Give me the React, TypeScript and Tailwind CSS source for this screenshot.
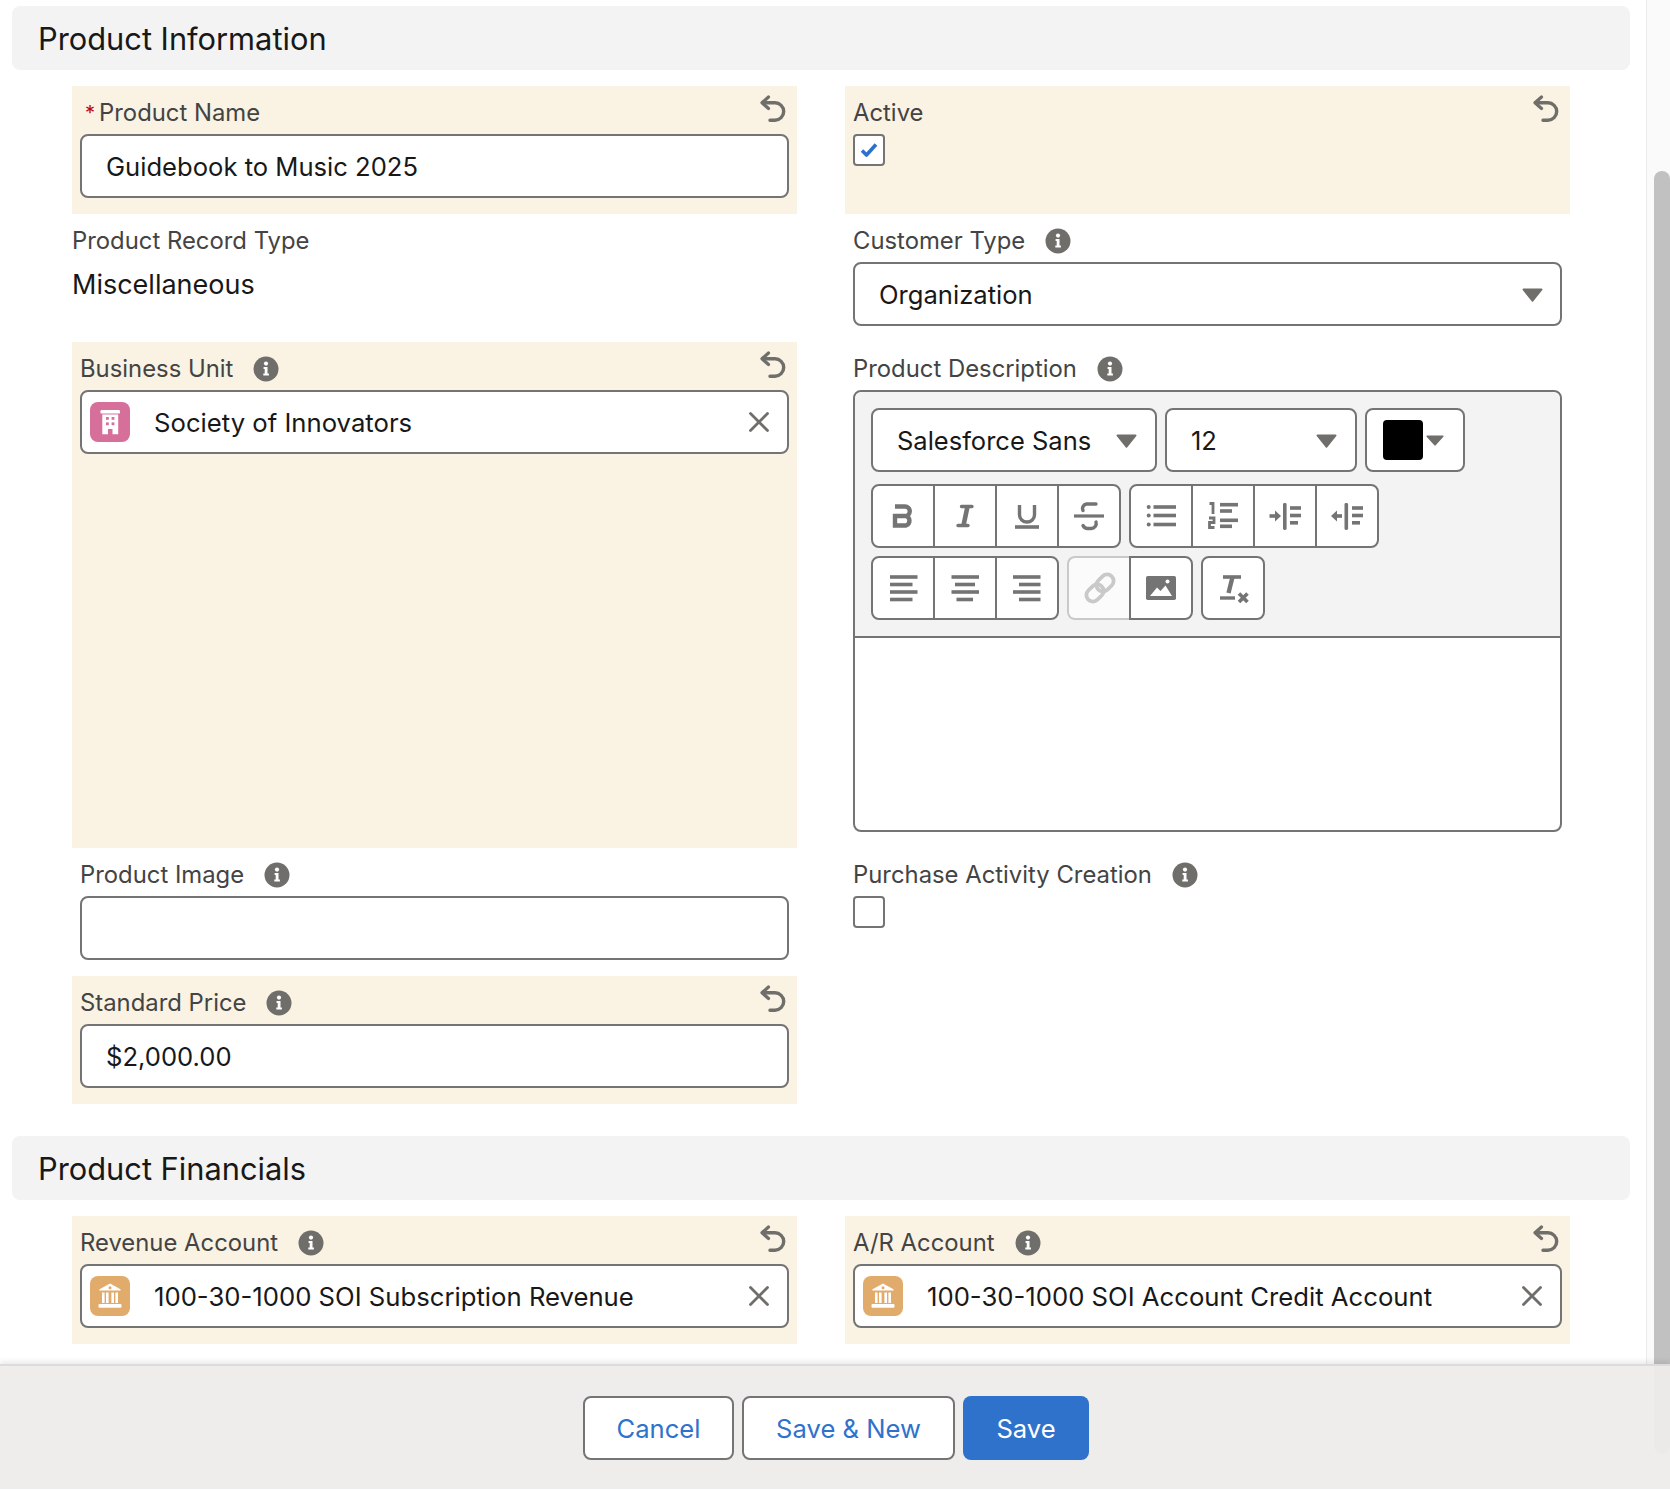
import React from "react";

const FONT = "font-['Inter','Liberation_Sans',sans-serif]";

function Info() {
  return (
    <svg width="26" height="26" viewBox="0 0 26 26" className="shrink-0">
      <circle cx="13" cy="13" r="12.5" fill="#706e6b" />
      <circle cx="13" cy="7.6" r="2.1" fill="#fff" />
      <path d="M10.6 11h3.9v6.6h1.4v2h-5.6v-2h1.4v-4.6h-1.1z" fill="#fff" />
    </svg>
  );
}

function Undo() {
  return (
    <svg width="26" height="28" viewBox="0 0 26 28" fill="none" className="shrink-0">
      <path d="M8.5 2 L2 7.8 L8.5 13.5" stroke="#706e6b" strokeWidth="3.2" strokeLinecap="round" strokeLinejoin="round" />
      <path d="M3 7.8 H15 a8.7 8.7 0 0 1 0 17.4 H10" stroke="#706e6b" strokeWidth="3.4" strokeLinecap="round" />
    </svg>
  );
}

function Close() {
  return (
    <svg width="20" height="20" viewBox="0 0 20 20" fill="none" className="shrink-0">
      <path d="M1.5 1.5 L18.5 18.5 M18.5 1.5 L1.5 18.5" stroke="#706e6b" strokeWidth="2.8" strokeLinecap="round" />
    </svg>
  );
}

function Caret({ w = 21, h = 14 }: { w?: number; h?: number }) {
  return (
    <svg width={w} height={h} viewBox="0 0 21 14" preserveAspectRatio="none" className="shrink-0">
      <path d="M1.5 0.5 H19.5 a1 1 0 0 1 0.8 1.6 L11.3 13.2 a1 1 0 0 1 -1.6 0 L0.7 2.1 a1 1 0 0 1 0.8 -1.6z" fill="#706e6b" />
    </svg>
  );
}

function Bank() {
  return (
    <div className="w-10 h-10 rounded-lg bg-[#e1ab6c] shrink-0 flex items-center justify-center">
      <svg width="40" height="40" viewBox="0 0 40 40">
        <path d="M20 7.5 L30 13 a0.8 0.8 0 0 1 -0.4 1.6 H10.4 a0.8 0.8 0 0 1 -0.4 -1.6z" fill="#fff" />
        <circle cx="20" cy="11.8" r="1.5" fill="#e1ab6c" />
        <rect x="12" y="16.5" width="2.6" height="10.5" fill="#fff" />
        <rect x="16" y="16.5" width="2.6" height="10.5" fill="#fff" />
        <rect x="21.4" y="16.5" width="2.6" height="10.5" fill="#fff" />
        <rect x="25.4" y="16.5" width="2.6" height="10.5" fill="#fff" />
        <rect x="8.5" y="28" width="23" height="3.8" rx="1" fill="#fff" />
      </svg>
    </div>
  );
}

function Building() {
  return (
    <div className="w-10 h-10 rounded-lg bg-[#d6709b] shrink-0 flex items-center justify-center">
      <svg width="40" height="40" viewBox="0 0 40 40">
        <rect x="10.5" y="8" width="19.5" height="3.6" rx="1.2" fill="#fff" />
        <path d="M12.3 12.5 H28.2 V32.3 H22.5 V27 H18 V32.3 H12.3z" fill="#fff" />
        <rect x="16" y="15" width="2.8" height="2.8" fill="#d6709b" />
        <rect x="21.6" y="15" width="2.8" height="2.8" fill="#d6709b" />
        <rect x="16" y="20.4" width="2.8" height="2.8" fill="#d6709b" />
        <rect x="21.6" y="20.4" width="2.8" height="2.8" fill="#d6709b" />
      </svg>
    </div>
  );
}

function Field({
  label,
  info,
  undo,
  highlight,
  required,
  flush,
  children,
}: {
  label: string;
  info?: boolean;
  undo?: boolean;
  highlight?: boolean;
  required?: boolean;
  flush?: boolean;
  children?: React.ReactNode;
}) {
  return (
    <div className={`${highlight ? "bg-[#faf2e2]" : ""} ${flush ? "" : "px-2"} pb-4`}>
      <div className="h-12 pt-[6px] flex items-center justify-between">
        <div className="flex items-center text-[23.85px] leading-[32px] text-[#444444]">
          {required && <span className="ml-[5px] mr-[4px] text-[#ba0517] text-[20px] leading-[20px]">*</span>}
          <span>{label}</span>
          {info && <span className="ml-5 -mt-[1px] flex"><Info /></span>}
        </div>
        {undo && <span className="self-start mt-[3px] mr-[3px] flex"><Undo /></span>}
      </div>
      {children}
    </div>
  );
}

function TextBox({ children }: { children?: React.ReactNode }) {
  return (
    <div className="h-16 rounded-lg border-2 border-[#747474] bg-white pl-[24px] pr-[17px] pt-[2px] flex items-center justify-between text-[25.6px] text-[#181818]">
      {children}
    </div>
  );
}

function Lookup({ tile, text }: { tile: React.ReactNode; text: string }) {
  return (
    <div className="h-16 rounded-lg border-2 border-[#747474] bg-white pl-2 pr-[18px] flex items-center text-[25.7px] text-[#181818]">
      {tile}
      <span className="ml-6 flex-1 mt-[2px]">{text}</span>
      <Close />
    </div>
  );
}

function CheckBox({ checked }: { checked?: boolean }) {
  return (
    <div className="w-8 h-8 rounded border-2 border-[#747474] bg-white flex items-center justify-center">
      {checked && (
        <svg width="18" height="16" viewBox="0 0 18 16" fill="none">
          <path d="M2 8.5 L6.5 13 L16 2.5" stroke="#2e71cc" strokeWidth="3.6" strokeLinejoin="round" />
        </svg>
      )}
    </div>
  );
}

function Tool({ children, disabled }: { children: React.ReactNode; disabled?: boolean }) {
  return (
    <div
      className={`w-16 h-16 flex items-center justify-center border-2 -ml-[2px] first:ml-0 first:rounded-l-lg last:rounded-r-lg ${
        disabled ? "bg-[#fbfbfb] border-[#c9c9c9] border-r-0" : "bg-white border-[#747474]"
      }`}
    >
      {children}
    </div>
  );
}

function Ico({ children }: { children: React.ReactNode }) {
  return (
    <svg width="32" height="32" viewBox="0 0 32 32" fill="none" stroke="#747474" strokeWidth="3.2">
      {children}
    </svg>
  );
}

function Bars({ lines }: { lines: [number, number, number][] }) {
  return (
    <>
      {lines.map(([y, a, b], i) => (
        <rect key={i} x={a} y={y - 1.8} width={b - a} height="3.6" fill="#747474" stroke="none" />
      ))}
    </>
  );
}

function Toolbar() {
  return (
    <div className="bg-[#f3f3f3] border-b-2 border-[#747474] pl-4 pt-4 pb-4 rounded-t-lg flex flex-col">
      <div className="flex gap-2">
        <div className="w-[286px] h-16 rounded-lg border-2 border-[#747474] bg-white pl-[24px] pr-[18px] pt-[2px] flex items-center justify-between text-[25.5px] text-[#181818]">
          <span>Salesforce Sans</span>
          <Caret />
        </div>
        <div className="w-[192px] h-16 rounded-lg border-2 border-[#747474] bg-white pl-[24px] pr-[18px] pt-[2px] flex items-center justify-between text-[25.5px] text-[#181818]">
          <span>12</span>
          <Caret />
        </div>
        <div className="w-[100px] h-16 rounded-lg border-2 border-[#747474] bg-white pl-4 flex items-center">
          <div className="w-10 h-10 rounded bg-black" />
          <span className="ml-[3px] flex"><Caret w={18} h={11} /></span>
        </div>
      </div>
      <div className="flex gap-2 mt-3">
        <div className="flex">
          <Tool>
            <Ico>
              <path d="M8 6.5 H18 a4.6 4.6 0 0 1 0 9.5 H8 M8 16 H19 a5 5 0 0 1 0 9.5 H8 Z" strokeWidth="4.4" />
            </Ico>
          </Tool>
          <Tool>
            <Ico>
              <path d="M12.5 6.5 H23 M9 25.5 H19" strokeWidth="3.4" strokeLinecap="round" />
              <path d="M18.5 6.5 L14.5 25.5" strokeWidth="4.6" />
            </Ico>
          </Tool>
          <Tool>
            <Ico>
              <path d="M8.5 5 V15 a7.5 7 0 0 0 15 0 V5" strokeWidth="3.4" />
              <path d="M4 27 H28" strokeWidth="3.6" />
            </Ico>
          </Tool>
          <Tool>
            <Ico>
              <path d="M1 16 H31" />
              <path d="M23 4 H13.5 a4.6 4.6 0 0 0 -3.5 6.5" strokeLinecap="round" strokeWidth="3.4" />
              <path d="M23 22 a5 5 0 0 1 -5 6.5 H14 a5 5 0 0 1 -4 -3" strokeLinecap="round" strokeWidth="3.4" />
            </Ico>
          </Tool>
        </div>
        <div className="flex">
          <Tool>
            <Ico>
              <circle cx="3.7" cy="7" r="2" fill="#747474" stroke="none" />
              <circle cx="3.7" cy="15.5" r="2" fill="#747474" stroke="none" />
              <circle cx="3.7" cy="24.5" r="2" fill="#747474" stroke="none" />
              <Bars lines={[[7, 8.5, 31], [15.5, 8.5, 31], [24.5, 8.5, 31]]} />
            </Ico>
          </Tool>
          <Tool>
            <Ico>
              <path d="M2.5 3.5 H6 V14" strokeWidth="2.8" />
              <path d="M2 18 H7 V22.5 H2.5 V27.5 H7.5" strokeWidth="2.8" />
              <Bars lines={[[4.7, 13, 31], [11, 13, 25], [20.3, 13, 31], [26.3, 13, 25]]} />
            </Ico>
          </Tool>
          <Tool>
            <Ico>
              <path d="M0.5 16 H8" strokeWidth="3.6" />
              <path d="M6 10.5 L12 16 L6 21.5z" fill="#747474" stroke="none" />
              <rect x="14" y="3" width="3.6" height="27" rx="1.4" fill="#747474" stroke="none" />
              <Bars lines={[[8, 21, 32], [15.5, 21, 32], [22.8, 21, 29]]} />
            </Ico>
          </Tool>
          <Tool>
            <Ico>
              <path d="M11 16 H4" strokeWidth="3.6" />
              <path d="M6 10.5 L0 16 L6 21.5z" fill="#747474" stroke="none" />
              <rect x="13.5" y="3" width="3.6" height="27" rx="1.4" fill="#747474" stroke="none" />
              <Bars lines={[[8, 21, 32], [15.5, 21, 32], [22.8, 21, 29]]} />
            </Ico>
          </Tool>
        </div>
      </div>
      <div className="flex gap-2 mt-2">
        <div className="flex">
          <Tool>
            <Ico>
              <Bars lines={[[5, 3, 30.5], [12.5, 3, 25.5], [20, 3, 30.5], [27.5, 3, 25.5]]} />
            </Ico>
          </Tool>
          <Tool>
            <Ico>
              <Bars lines={[[5, 2.5, 30], [12.5, 6, 26], [20, 2.5, 30], [27.5, 7.5, 24]]} />
            </Ico>
          </Tool>
          <Tool>
            <Ico>
              <Bars lines={[[5, 2, 29.5], [12.5, 8, 29.5], [20, 2, 29.5], [27.5, 8, 29.5]]} />
            </Ico>
          </Tool>
        </div>
        <div className="flex">
          <Tool disabled>
            <svg width="32" height="32" viewBox="0 0 32 32" fill="none" stroke="#c9c9c9" strokeWidth="3.8">
              <rect x="11.5" y="4.5" width="19" height="13" rx="6.5" transform="rotate(-45 21 11)" />
              <rect x="1.5" y="14.5" width="19" height="13" rx="6.5" transform="rotate(-45 11 21)" />
            </svg>
          </Tool>
          <Tool>
            <Ico>
              <rect x="1" y="4" width="30" height="24" rx="1.8" fill="#747474" stroke="none" />
              <path d="M5 24 L12 15.5 L15.5 19 L20.5 13.5 L27 24z" fill="#fff" stroke="none" />
              <circle cx="22.5" cy="9.5" r="2" fill="#fff" stroke="none" />
            </Ico>
          </Tool>
        </div>
        <div className="flex">
          <Tool>
            <Ico>
              <path d="M6 5 H24" strokeWidth="3.6" />
              <path d="M15.5 5 L11.5 21" strokeWidth="4.4" />
              <path d="M3 26 H18" strokeWidth="3.4" />
              <path d="M22 21.5 L30.5 30 M30.5 21.5 L22 30" strokeWidth="3.6" />
            </Ico>
          </Tool>
        </div>
      </div>
    </div>
  );
}

function SectionHeader({ title }: { title: string }) {
  return (
    <div className="h-16 rounded-lg bg-[#f3f3f3] pl-[26px] pt-[2px] flex items-center text-[30.8px] text-[#181818]">{title}</div>
  );
}

function FooterButton({ label, primary, w }: { label: string; primary?: boolean; w: string }) {
  return (
    <div
      className={`${w} h-16 pt-[3px] rounded-lg flex items-center justify-center text-[25.6px] ${
        primary ? "bg-[#2f72cc] text-white" : "bg-white border-2 border-[#747474] text-[#2f72cc]"
      }`}
    >
      {label}
    </div>
  );
}

export default function App() {
  return (
    <div className={`${FONT} w-[1670px] h-[1490px] bg-white overflow-hidden flex flex-col`}>
      <div className="h-[1364px] flex overflow-hidden">
        <div className="w-[1646px] pl-3 pr-4 pt-[6px]">
          <SectionHeader title="Product Information" />
          <div className="mt-4 px-[60px] grid grid-cols-2 gap-x-12">
            <Field label="Product Name" required undo highlight>
              <TextBox>Guidebook to Music 2025</TextBox>
            </Field>
            <Field label="Active" undo highlight>
              <CheckBox checked />
            </Field>
            <Field label="Product Record Type" flush>
              <div className="h-16 pt-[5px] text-[27px] leading-[36px] text-[#181818]">Miscellaneous</div>
            </Field>
            <Field label="Customer Type" info>
              <TextBox>
                <span>Organization</span>
                <Caret />
              </TextBox>
            </Field>
            <Field label="Business Unit" info undo highlight>
              <Lookup tile={<Building />} text="Society of Innovators" />
            </Field>
            <Field label="Product Description" info>
              <div className="h-[442px] rounded-lg border-2 border-[#747474] bg-white">
                <Toolbar />
              </div>
            </Field>
            <Field label="Product Image" info>
              <TextBox />
            </Field>
            <Field label="Purchase Activity Creation" info>
              <CheckBox />
            </Field>
            <Field label="Standard Price" info undo highlight>
              <TextBox>$2,000.00</TextBox>
            </Field>
            <div />
          </div>
          <div className="mt-8">
            <SectionHeader title="Product Financials" />
          </div>
          <div className="mt-4 px-[60px] grid grid-cols-2 gap-x-12">
            <Field label="Revenue Account" info undo highlight>
              <Lookup tile={<Bank />} text="100-30-1000 SOI Subscription Revenue" />
            </Field>
            <Field label="A/R Account" info undo highlight>
              <Lookup tile={<Bank />} text="100-30-1000 SOI Account Credit Account" />
            </Field>
          </div>
        </div>
        <div className="w-6 border-l border-[#ebebeb] bg-[#fafafa] pl-[7px] pt-[171px]">
          <div className="w-4 h-[1300px] rounded-full bg-[#c1c1c1]" />
        </div>
      </div>
      <div className="relative h-[125px] border-t-2 border-[#dddcdb] shadow-[0_-3px_5px_rgba(0,0,0,0.08)] bg-[#eeedec] pl-[2px] flex items-center justify-center gap-2">
        <FooterButton label="Cancel" w="w-[151px]" />
        <FooterButton label="Save & New" w="w-[213px]" />
        <FooterButton label="Save" primary w="w-[126px]" />
        <div className="absolute right-0 top-0 w-4 h-[88px] rounded-b-full bg-black/[0.01]" />
      </div>
    </div>
  );
}
